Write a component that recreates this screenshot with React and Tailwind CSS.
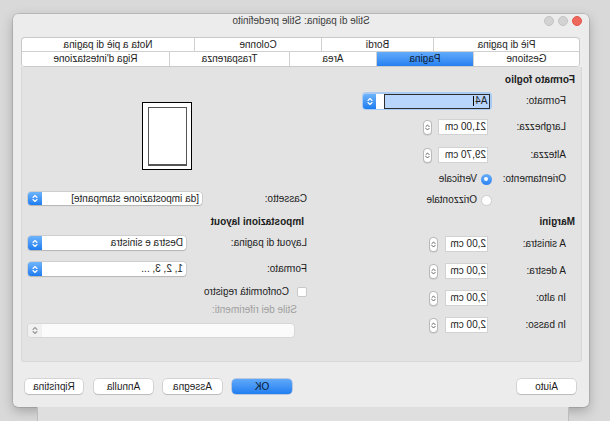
import React from 'react';

// Up/down arrows used in pop-up buttons
const Arrows = ({ color = '#ffffff', w = 6, h = 9 }) => (
    <svg width={w} height={h} viewBox="0 0 6 9" fill="none">
        <path d="M1 3.5 L3 1.5 L5 3.5" stroke={color} strokeWidth="1.1" strokeLinecap="round" strokeLinejoin="round" />
        <path d="M1 5.5 L3 7.5 L5 5.5" stroke={color} strokeWidth="1.1" strokeLinecap="round" strokeLinejoin="round" />
    </svg>
);

const Stepper = () => (
    <div className="w-[9px] h-[15px] rounded-[4px] border border-[#b9b9b9] bg-white flex items-center justify-center shadow-[0_0.5px_0.5px_rgba(0,0,0,0.15)]">
        <Arrows color="#555" w={5} h={9} />
    </div>
);

const Popup = ({ text, h = 'h-[14px]' }) => (
    <div className={`flex-1 ${h} flex rounded-[3px] bg-white shadow-[0_0_0_0.5px_rgba(0,0,0,0.18),0_1px_1px_rgba(0,0,0,0.12)]`}>
        <div className="flex-1 flex items-center pl-[3px] text-[10px] leading-none text-[#1c1c1c] whitespace-nowrap">{text}</div>
        <div className="w-[14px] rounded-r-[3px] bg-gradient-to-b from-[#6db4fb] to-[#1b7cf0] flex items-center justify-center">
            <Arrows />
        </div>
    </div>
);

const NumField = ({ value, w = 'w-[50px]', gap = 'ml-[6px]' }) => (
    <div className="flex items-center">
        <div className={`${w} h-[16px] bg-white border border-[#d2d2d2] flex items-center pl-[1px] text-[10px] leading-none text-[#1c1c1c] whitespace-nowrap`}>{value}</div>
        <div className={gap}><Stepper /></div>
    </div>
);

const Label = ({ children, w }) => (
    <div className={`${w} text-[10px] leading-none text-[#1c1c1c] whitespace-nowrap`}>{children}</div>
);

const Button = ({ children, primary }) => (
    <div
        className={`h-[15px] flex items-center justify-center rounded-[4px] text-[10px] leading-none ${
            primary
                ? 'bg-gradient-to-b from-[#5fa9fa] to-[#1f7ef0] text-[#0c1a33] shadow-[0_0_0_0.5px_rgba(0,60,160,0.4)]'
                : 'bg-white text-[#1c1c1c] shadow-[0_0_0_0.5px_rgba(0,0,0,0.2),0_1px_1px_rgba(0,0,0,0.12)]'
        }`}
    >
        {children}
    </div>
);

const Tab = ({ label, w, active, last }) => (
    <div
        className={`${w} h-full flex items-center justify-center text-[10px] leading-none ${
            last ? '' : 'border-r border-[#d0d0d0]'
        } ${active ? 'bg-gradient-to-b from-[#62abfa] to-[#2580f1] text-[#0c1a33]' : 'text-[#1c1c1c]'}`}
    >
        {label}
    </div>
);

export default function App() {
    return (
        <div className="w-[610px] h-[421px] overflow-hidden bg-[#d9d9d9] -scale-x-100 font-['Liberation_Sans',Arial,sans-serif]">
            {/* Dialog window */}
            <div className="ml-[21px] mt-[14px] w-[576px] h-[393px] bg-[#ececec] rounded-[5px] shadow-[0_0_0_0.5px_rgba(0,0,0,0.2),0_4px_12px_rgba(0,0,0,0.25)] flex flex-col">
                {/* Title bar */}
                <div className="relative h-[14px] flex items-center">
                    <div className="flex items-center gap-[4px] pl-[7px]">
                        <span className="w-[10px] h-[10px] rounded-full bg-[#f0675c] border border-[#e0544a]" />
                        <span className="w-[10px] h-[10px] rounded-full bg-[#d3d3d3] border border-[#c4c4c4]" />
                        <span className="w-[10px] h-[10px] rounded-full bg-[#d3d3d3] border border-[#c4c4c4]" />
                    </div>
                    <div className="absolute inset-0 flex items-center justify-center text-[10px] leading-none text-[#3c3c3c]">
                        Stile di pagina: Stile predefinito
                    </div>
                </div>

                {/* Tabs */}
                <div className="ml-[9px] mt-[9px] w-[559px] rounded-[4px] border-t border-x border-[#c9c9c9] bg-white overflow-hidden">
                    <div className="h-[14px] flex border-b border-[#d0d0d0]">
                        <Tab label="Piè di pagina" w="w-[146px]" />
                        <Tab label="Bordi" w="w-[112px]" />
                        <Tab label="Colonne" w="w-[127px]" />
                        <Tab label="Nota a piè di pagina" w="flex-1" last />
                    </div>
                    <div className="h-[15px] flex border-b border-[#c9c9c9]">
                        <Tab label="Gestione" w="w-[106px]" />
                        <Tab label="Pagina" w="w-[97px]" active />
                        <Tab label="Area" w="w-[87px]" />
                        <Tab label="Trasparenza" w="w-[120px]" />
                        <Tab label="Riga d'intestazione" w="flex-1" last />
                    </div>
                </div>

                {/* Panel */}
                <div className="ml-[7px] w-[561px] h-[295px] bg-[#e3e3e3] border-x border-b border-[#d8d8d8] rounded-b-[3px] flex">
                    {/* Left column */}
                    <div className="ml-[6px] w-[268px] flex flex-col">
                        <div className="mt-[7px] h-[12px] flex items-center text-[10px] font-bold leading-none text-[#1c1c1c]">Formato foglio</div>

                        <div className="mt-[6px] h-[18px] flex items-center pl-[9px]">
                            <Label w="w-[74px]">Formato:</Label>
                            <div className="w-[130px] h-[18px] rounded-[4px] bg-[#a9cbf3] p-[1.5px] flex">
                                <div className="flex-1 border border-[#2e2e2e] bg-[#b8d6fb] flex items-center pl-[2px] text-[10px] leading-none text-[#1c1c1c]">
                                    A4<span className="ml-[1px] w-[1px] h-[10px] bg-black" />
                                </div>
                                <div className="w-[8px] bg-white" />
                                <div className="w-[13px] rounded-r-[3px] bg-gradient-to-b from-[#6db4fb] to-[#1b7cf0] flex items-center justify-center">
                                    <Arrows />
                                </div>
                            </div>
                        </div>

                        <div className="mt-[9px] h-[16px] flex items-center pl-[9px]">
                            <Label w="w-[78px]">Larghezza:</Label>
                            <NumField value="21,00 cm" />
                        </div>
                        <div className="mt-[12px] h-[16px] flex items-center pl-[9px]">
                            <Label w="w-[78px]">Altezza:</Label>
                            <NumField value="29,70 cm" />
                        </div>

                        <div className="mt-[10px] h-[12px] flex items-center pl-[9px]">
                            <Label w="w-[74px]">Orientamento:</Label>
                            <span className="w-[11px] h-[11px] rounded-full bg-gradient-to-b from-[#67aefa] to-[#2a83f2] flex items-center justify-center">
                                <span className="w-[4px] h-[4px] rounded-full bg-white" />
                            </span>
                            <span className="ml-[4px] text-[10px] leading-none text-[#1c1c1c]">Verticale</span>
                        </div>
                        <div className="mt-[9px] h-[12px] flex items-center pl-[83px]">
                            <span className="w-[11px] h-[11px] rounded-full bg-white border border-[#cdcdcd]" />
                            <span className="ml-[4px] text-[10px] leading-none text-[#1c1c1c]">Orizzontale</span>
                        </div>

                        <div className="mt-[10px] h-[12px] flex items-center text-[10px] font-bold leading-none text-[#1c1c1c]">Margini</div>
                        {[
                            ['A sinistra:', 'mt-[8px]'],
                            ['A destra:', 'mt-[11px]'],
                            ['In alto:', 'mt-[11px]'],
                            ['In basso:', 'mt-[11px]'],
                        ].map(([label, mt]) => (
                            <div key={label} className={`${mt} h-[16px] flex items-center pl-[9px]`}>
                                <Label w="w-[78px]">{label}</Label>
                                <NumField value="2,00 cm" w="w-[43px]" gap="ml-[7px]" />
                            </div>
                        ))}
                    </div>

                    {/* Right column */}
                    <div className="w-[279px] flex flex-col">
                        <div className="mt-[35px] self-center w-[50px] h-[68px] border border-black bg-white flex items-center justify-center">
                            <div className="w-[39px] h-[59px] border border-[#555] border-b-2 bg-white" />
                        </div>

                        <div className="mt-[22px] h-[13px] flex items-center">
                            <Label w="w-[105px]">Cassetto:</Label>
                            <Popup text="[da impostazione stampante]" h="h-[13px]" />
                        </div>

                        <div className="mt-[11px] h-[12px] flex items-center pl-[3px] text-[10px] font-bold leading-none text-[#1c1c1c]">Impostazioni layout</div>

                        <div className="mt-[8px] h-[14px] flex items-center">
                            <Label w="w-[121px]">Layout di pagina:</Label>
                            <Popup text="Destra e sinistra" />
                        </div>
                        <div className="mt-[12px] h-[14px] flex items-center">
                            <Label w="w-[121px]">Formato:</Label>
                            <Popup text="1, 2, 3, ..." />
                        </div>

                        <div className="mt-[11px] h-[10px] flex items-center">
                            <span className="w-[10px] h-[10px] bg-white border border-[#c9c9c9] rounded-[2px]" />
                            <span className="ml-[8px] text-[10px] leading-none text-[#1c1c1c]">Conformità registro</span>
                        </div>
                        <div className="mt-[8px] h-[10px] flex items-center pl-[10px] text-[10px] leading-none text-[#a0a0a0]">Stile dei riferimenti:</div>

                        <div className="mt-[9px] ml-[13px] h-[13px] flex rounded-[3px] bg-[#fbfbfb] shadow-[0_0_0_0.5px_rgba(0,0,0,0.1)]">
                            <div className="flex-1" />
                            <div className="w-[14px] rounded-r-[3px] bg-[#f1f1f1] flex items-center justify-center">
                                <Arrows color="#9a9a9a" />
                            </div>
                        </div>
                    </div>
                </div>

                {/* Buttons */}
                <div className="mt-[17px] flex items-center pl-[13px] pr-[12px]">
                    <div className="w-[59px]"><Button>Aiuto</Button></div>
                    <div className="ml-auto w-[60px]"><Button primary>OK</Button></div>
                    <div className="ml-[10px] w-[59px]"><Button>Assegna</Button></div>
                    <div className="ml-[10px] w-[59px]"><Button>Annulla</Button></div>
                    <div className="ml-[11px] w-[58px]"><Button>Ripristina</Button></div>
                </div>
            </div>

            {/* Document page behind the dialog */}
            <div className="ml-[41px] w-[532px] h-[14px] bg-[#dfdfdf] border-x border-[#bdbdbd]" />
        </div>
    );
}
